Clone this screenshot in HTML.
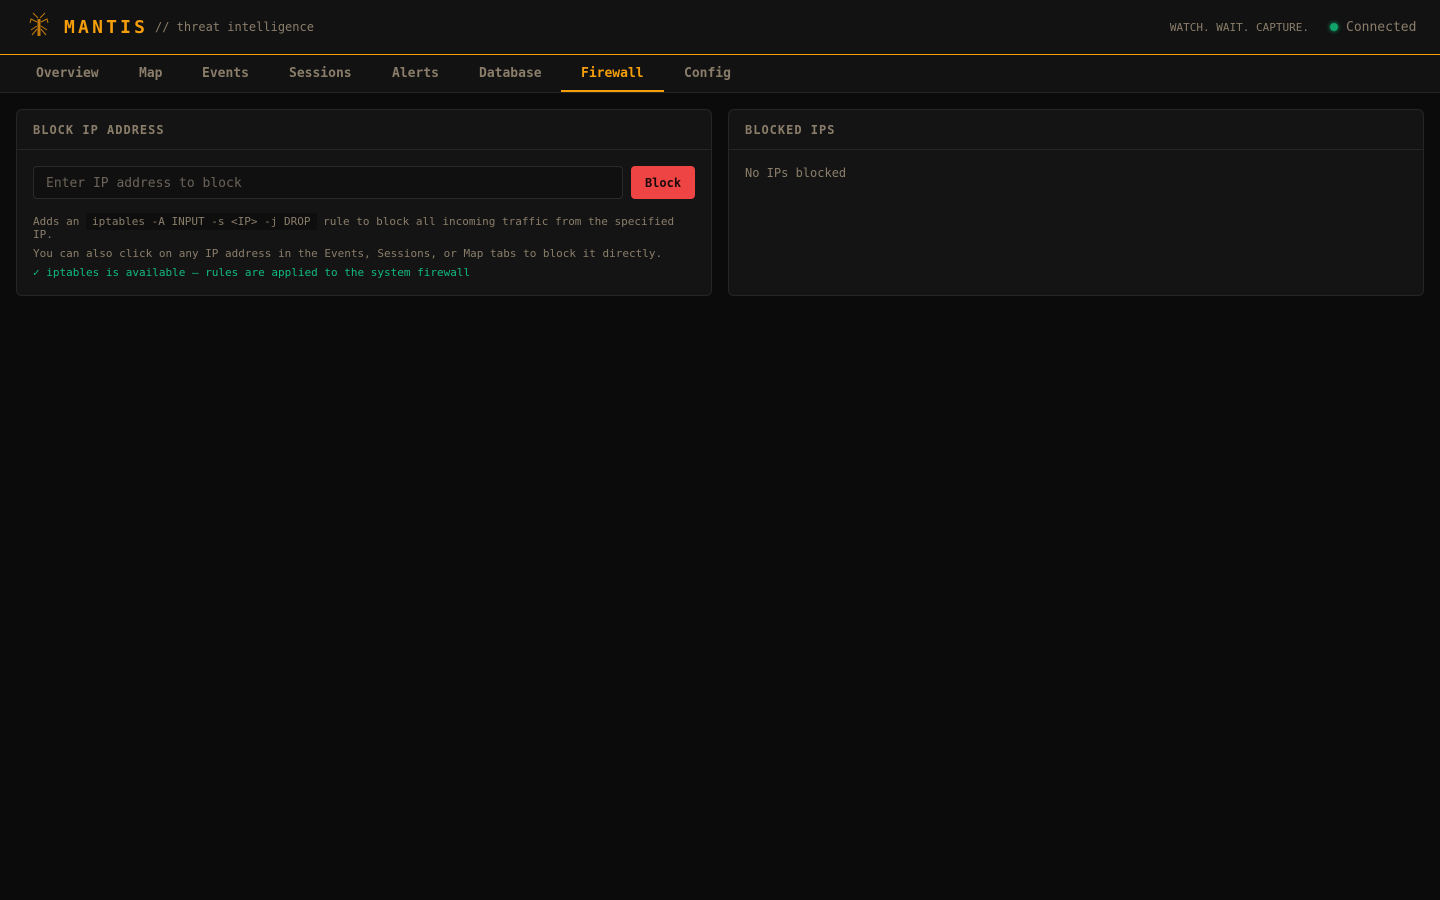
<!DOCTYPE html>
<html><head><meta charset="utf-8"><style>
*{box-sizing:border-box;margin:0;padding:0}
body{width:1440px;height:900px;background:#0b0b0b;font-family:"DejaVu Sans Mono","Liberation Mono",monospace;color:#8a7d6a;overflow:hidden}
.hdr{height:55px;background:#121212;border-bottom:1px solid #f59e0b;position:relative}
.logo{position:absolute;left:28px;top:12px}
.brand{position:absolute;left:64px;top:17px;font-size:18px;font-weight:bold;color:#f59e0b;letter-spacing:3.2px}
.sub{position:absolute;left:155px;top:20px;font-size:12px;color:#8a7d6a}
.motto{position:absolute;right:131px;top:21px;font-size:11px;color:#8a7d6a}
.dot{position:absolute;left:1330px;top:23px;width:8px;height:8px;border-radius:50%;background:#10a36a;box-shadow:0 0 4px #10a36a}
.conn{position:absolute;left:1346px;top:20px;font-size:13px;color:#8a7d6a}
.nav{height:38px;background:#121212;border-bottom:1px solid #262626;position:relative}
.nav span{position:absolute;top:11px;font-size:13px;font-weight:bold;color:#8a7d6a}
.nav .act{color:#f59e0b}
.ul{position:absolute;left:561px;top:35px;width:103px;height:2px;background:#f59e0b}
.card{position:absolute;top:109px;width:696px;height:187px;background:#141414;border:1px solid #262626;border-radius:6px}
.ch{height:40px;border-bottom:1px solid #262626;padding:13px 16px;font-size:12px;font-weight:bold;letter-spacing:1px;color:#8a7d6a}
.inp{position:absolute;left:16px;top:56px;width:590px;height:33px;border:1px solid #2a2a2a;border-radius:4px;background:#101010;font-size:13px;color:#6b6359;padding:9px 12px 7px}
.btn{position:absolute;left:614px;top:56px;width:64px;height:33px;background:#ef4444;border-radius:4px;color:#1a0a0a;font-size:12px;font-weight:bold;text-align:center;line-height:34px}
.p{position:absolute;left:16px;font-size:11px;color:#8a7d6a;width:662px;line-height:13px}
code{background:#0e0e0e;padding:2px 6px;font-family:inherit}
.ok{color:#10b981}
</style></head><body>
<div class="hdr">
<svg class="logo" width="22" height="26" viewBox="0 0 22 26" stroke="#c27a0a" fill="none" stroke-width="1">
<path d="M5 1 L10 6 M17 1 L12 6"/><rect x="9.5" y="7" width="3" height="17" fill="#c27a0a" stroke="none"/>
<path d="M9 10 L3 7 L2 11 M13 10 L19 7 L20 11 M9 14 L3 18 M13 14 L19 18 M9 17 L4 23 M13 17 L18 23"/></svg>
<div class="brand">MANTIS</div>
<div class="sub">// threat intelligence</div>
<div class="motto">WATCH. WAIT. CAPTURE.</div>
<div class="dot"></div>
<div class="conn">Connected</div>
</div>
<div class="nav">
<span style="left:36px">Overview</span><span style="left:139px">Map</span><span style="left:202px">Events</span><span style="left:289px">Sessions</span><span style="left:392px">Alerts</span><span style="left:479px">Database</span><span class="act" style="left:581px">Firewall</span><span style="left:684px">Config</span>
<div class="ul"></div>
</div>
<div class="card" style="left:16px">
<div class="ch">BLOCK IP ADDRESS</div>
<div class="inp">Enter IP address to block</div>
<div class="btn">Block</div>
<div class="p" style="top:105px">Adds an <code>iptables -A INPUT -s &lt;IP&gt; -j DROP</code> rule to block all incoming traffic from the specified IP.</div>
<div class="p" style="top:137px">You can also click on any IP address in the Events, Sessions, or Map tabs to block it directly.</div>
<div class="p ok" style="top:156px">✓ iptables is available — rules are applied to the system firewall</div>
</div>
<div class="card" style="left:728px">
<div class="ch">BLOCKED IPS</div>
<div style="position:absolute;left:16px;top:56px;font-size:12px">No IPs blocked</div>
</div>
</body></html>
